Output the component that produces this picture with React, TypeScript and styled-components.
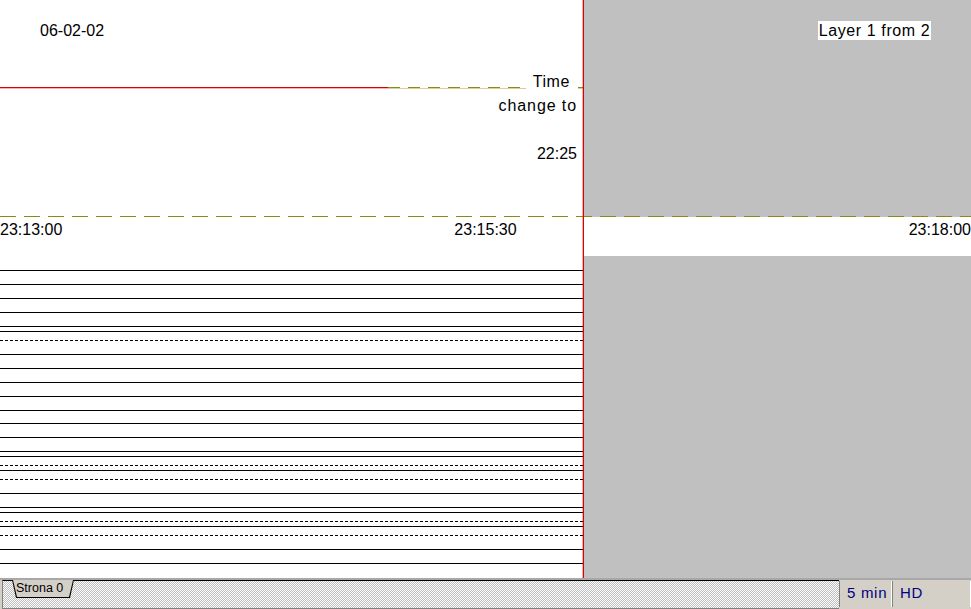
import React from 'react';
import styled, { createGlobalStyle } from 'styled-components';

const RED = '#d80000';
const RED_HALO = 'rgba(220, 0, 0, 0.3)';
const OLIVE = '#8c8a10';
const OLIVE_HALO = 'rgba(140, 138, 16, 0.4)';
const PANEL_GRAY = '#c0c0c0';
const FACE = '#d4d0c8';

const CHART_TOP = 256;
const SOLID_TRACES = [270, 284, 298, 312, 326, 331, 354, 368, 382, 396, 410, 423, 437, 451, 456, 470, 493, 507, 512, 526, 549, 563];
const DOTTED_TRACES = [340, 465, 479, 521, 535];

const GlobalStyle = createGlobalStyle`
  html, body {
    margin: 0;
    padding: 0;
    background: #ffffff;
  }
  body {
    font-family: "Liberation Sans", Arial, sans-serif;
    font-size: 16px;
    color: #000;
  }
`;

const Screen = styled.div`
  width: 971px;
  height: 609px;
  display: flex;
  flex-direction: column;
  overflow: hidden;
`;

const Plot = styled.div`
  display: grid;
  grid-template-columns: 583px 1px 387px;
  grid-template-rows: 216px 1px 39px 322px;
  height: 578px;
`;

const TopLeft = styled.div`
  grid-area: 1 / 1;
  display: flex;
  flex-direction: column;
  padding-top: 19px;
  line-height: 24px;
`;

const DateLabel = styled.div`
  padding-left: 40px;
`;

const MarkerRow = styled.div`
  display: flex;
  align-items: flex-start;
  height: 24px;
  margin-top: 27px;
`;

const Trace = styled.div`
  flex: 1;
  display: flex;
  height: 1px;
  margin-top: 17px;
`;

const RedSeg = styled.div`
  width: 388px;
  background: ${RED};
  box-shadow: 0 1px 0 ${RED_HALO};
`;

const DashSeg = styled.div<{ $width?: number }>`
  flex: ${(p) => (p.$width ? `0 0 ${p.$width}px` : '1')};
  height: 1px;
  margin-top: ${(p) => (p.$width ? '17px' : '0')};
  background: repeating-linear-gradient(to right, ${OLIVE} 0 12px, transparent 12px 20px);
  box-shadow: 0 1px 0 ${OLIVE_HALO};
`;

const TimeTag = styled.span`
  padding: 0 8px 0 7px;
  letter-spacing: 0.6px;
`;

const Readout = styled.div<{ $spacing?: number }>`
  text-align: right;
  padding-right: 6px;
  min-height: 24px;
  letter-spacing: ${(p) => p.$spacing ?? 0}px;
`;

const TopRight = styled.div`
  grid-area: 1 / 3;
  background: ${PANEL_GRAY};
  display: flex;
  justify-content: flex-end;
  align-items: flex-start;
  padding: 21px 40px 0 0;
`;

const LayerBadge = styled.div`
  width: 113px;
  height: 19px;
  line-height: 19px;
  background: #fff;
  text-align: center;
  letter-spacing: 0.6px;
`;

const DashRow = styled.div`
  grid-row: 2;
  grid-column: 1 / -1;
  background:
    repeating-linear-gradient(to right, ${OLIVE} 0 16px, transparent 16px 24px),
    linear-gradient(to right, #fff 584px, ${PANEL_GRAY} 584px);
`;

const TimeAxis = styled.div`
  grid-row: 3;
  grid-column: 1 / -1;
  display: flex;
  justify-content: space-between;
  align-items: flex-start;
  padding-top: 4px;
  line-height: 18px;
  background: #fff;
`;

const ChartArea = styled.div`
  grid-area: 4 / 1;
  background: #fff;
`;

const GrayFill = styled.div`
  grid-area: 4 / 3;
  background: ${PANEL_GRAY};
`;

const Divider = styled.div`
  grid-column: 2;
  grid-row: 1 / -1;
  background: ${RED};
  box-shadow: -1px 0 0 ${RED_HALO};
  z-index: 1;
`;

const StatusBar = styled.div`
  height: 31px;
  display: flex;
  border-top: 2px solid #a8a8a8;
  box-sizing: border-box;
  background: ${FACE};
`;

const TabStrip = styled.div`
  flex: 1;
  display: flex;
  align-items: flex-start;
  padding-left: 9px;
  border-top: 1px solid #000;
  border-left: 1px solid #808080;
  border-bottom: 1px solid #808080;
  margin-left: 2px;
  background-color: #fff;
  background-image: conic-gradient(#bcbcbc 25%, #fff 0 50%, #bcbcbc 0 75%, #fff 0);
  background-size: 2px 2px;
`;

const Tab = styled.div`
  margin-top: -1px;
  width: 62px;
  height: 18px;
  background: #000;
  clip-path: polygon(0 0, 100% 0, calc(100% - 4px) 100%, 4px 100%);
  display: flex;
`;

const TabFace = styled.div`
  flex: 1;
  margin: 0 1px 1px;
  background: ${FACE};
  clip-path: polygon(0 0, 100% 0, calc(100% - 4px) 100%, 4px 100%);
  font-size: 12.5px;
  line-height: 17px;
  padding-left: 3px;
`;

const Panel = styled.div<{ $width: number }>`
  width: ${(p) => p.$width}px;
  box-sizing: border-box;
  margin-top: 1px;
  margin-bottom: 2px;
  border-left: 1px solid #808080;
  border-right: 1px solid #fff;
  padding-left: 7px;
  color: #000080;
  font-size: 15px;
  letter-spacing: 0.7px;
  line-height: 24px;
`;

function TraceChart() {
  return (
    <svg width="583" height="322" viewBox="0 0 583 322">
      {SOLID_TRACES.map((y) => (
        <line key={`s${y}`} x1="0" x2="583" y1={y - CHART_TOP + 0.5} y2={y - CHART_TOP + 0.5} stroke="#000" strokeWidth="1" />
      ))}
      {DOTTED_TRACES.map((y) => (
        <line
          key={`d${y}`}
          x1="0"
          x2="583"
          y1={y - CHART_TOP + 0.5}
          y2={y - CHART_TOP + 0.5}
          stroke="#000"
          strokeWidth="1"
          strokeDasharray="3 2"
        />
      ))}
    </svg>
  );
}

export default function App() {
  return (
    <>
      <GlobalStyle />
      <Screen>
        <Plot>
          <TopLeft>
            <DateLabel>06-02-02</DateLabel>
            <MarkerRow>
              <Trace>
                <RedSeg />
                <DashSeg />
              </Trace>
              <TimeTag>Time</TimeTag>
              <DashSeg $width={5} />
            </MarkerRow>
            <Readout $spacing={0.9}>change to</Readout>
            <Readout />
            <Readout>22:25</Readout>
          </TopLeft>
          <TopRight>
            <LayerBadge>Layer 1 from 2</LayerBadge>
          </TopRight>
          <DashRow />
          <TimeAxis>
            <span>23:13:00</span>
            <span>23:15:30</span>
            <span>23:18:00</span>
          </TimeAxis>
          <ChartArea>
            <TraceChart />
          </ChartArea>
          <GrayFill />
          <Divider />
        </Plot>
        <StatusBar>
          <TabStrip>
            <Tab>
              <TabFace>Strona 0</TabFace>
            </Tab>
          </TabStrip>
          <Panel $width={53}>5 min</Panel>
          <Panel $width={79}>HD</Panel>
        </StatusBar>
      </Screen>
    </>
  );
}
